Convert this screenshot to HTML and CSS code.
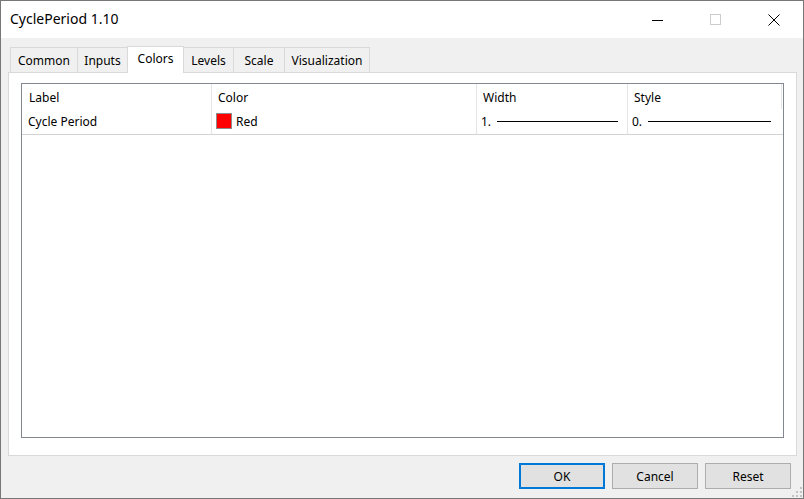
FILE: index.html
```html
<!DOCTYPE html>
<html>
<head>
<meta charset="utf-8">
<link rel="stylesheet" href="styles.css">
</head>
<body>
<div class="window">
  <div class="titlebar">
    <div class="title">CyclePeriod 1.10</div>
    <div class="controls">
      <div class="ctl"><svg width="12" height="12" viewBox="0 0 12 12"><line x1="0" y1="6.5" x2="11" y2="6.5" stroke="#000" stroke-width="1"/></svg></div>
      <div class="ctl"><svg width="12" height="12" viewBox="0 0 12 12"><rect x="0.5" y="0.5" width="10" height="10" fill="none" stroke="#cccccc" stroke-width="1"/></svg></div>
      <div class="ctl"><svg width="12" height="12" viewBox="0 0 12 12"><path d="M0.5 0.5 L11.5 11.5 M11.5 0.5 L0.5 11.5" stroke="#000" stroke-width="1" fill="none"/></svg></div>
    </div>
  </div>
  <div class="content">
    <div class="tabs">
      <div class="tab t-common">Common</div>
      <div class="tab t-inputs">Inputs</div>
      <div class="tab t-colors active">Colors</div>
      <div class="tab t-levels">Levels</div>
      <div class="tab t-scale">Scale</div>
      <div class="tab t-vis">Visualization</div>
    </div>
    <div class="panel">
      <div class="list">
        <div class="row header">
          <div class="cell c-label">Label</div>
          <div class="cell c-color">Color</div>
          <div class="cell c-width">Width</div>
          <div class="cell c-style">Style</div>
          <div class="cell c-rest"></div>
        </div>
        <div class="row item">
          <div class="cell c-label">Cycle Period</div>
          <div class="cell c-color"><span class="swatch"></span><span>Red</span></div>
          <div class="cell c-width"><span>1.</span><span class="linesample w1"></span></div>
          <div class="cell c-style"><span>0.</span><span class="linesample w2"></span></div>
          <div class="cell c-rest"></div>
        </div>
      </div>
    </div>
    <div class="buttons">
      <button class="btn default">OK</button>
      <button class="btn">Cancel</button>
      <button class="btn">Reset</button>
    </div>
    <div class="grip">
      <svg width="11" height="11" viewBox="0 0 11 11">
        <g fill="#c3c3c3">
          <rect x="8" y="0" width="2" height="2"/>
          <rect x="4" y="4" width="2" height="2"/><rect x="8" y="4" width="2" height="2"/>
          <rect x="0" y="8" width="2" height="2"/><rect x="4" y="8" width="2" height="2"/><rect x="8" y="8" width="2" height="2"/>
        </g>
      </svg>
    </div>
  </div>
</div>
</body>
</html>
```

FILE: styles.css
```css
html, body {
  margin: 0;
  padding: 0;
  background: #f0f0f0;
}
body {
  font-family: "Noto Sans", "Open Sans", sans-serif;
  font-size: 12px;
  color: #000;
}
.window {
  width: 804px;
  height: 499px;
  box-sizing: border-box;
  border: 1px solid #777777;
  display: flex;
  flex-direction: column;
  background: #f0f0f0;
  position: relative;
}
.titlebar {
  height: 37px;
  background: #ffffff;
  display: flex;
  align-items: center;
  justify-content: space-between;
  flex-shrink: 0;
}
.title {
  padding-left: 9px;
  font-size: 14px;
  line-height: 20px;
  margin-top: -1px;
}
.controls {
  display: flex;
  height: 100%;
}
.ctl {
  width: 58px;
  height: 100%;
  display: flex;
  align-items: center;
  justify-content: center;
}
.content {
  flex: 1;
  display: flex;
  flex-direction: column;
  position: relative;
}
.tabs {
  display: flex;
  align-items: flex-end;
  margin-top: 8px;
  margin-left: 9px;
  height: 26px;
  position: relative;
  z-index: 1;
}
.tab {
  box-sizing: border-box;
  height: 25px;
  border: 1px solid #d9d9d9;
  border-bottom: none;
  background: #f0f0f0;
  margin-right: -1px;
  display: flex;
  align-items: center;
  justify-content: center;
  padding-top: 1px;
}
.tab.active {
  height: 27px;
  background: #ffffff;
  margin-bottom: -1px;
  padding-top: 0;
  padding-bottom: 3px;
}
.t-common { width: 68px; }
.t-inputs { width: 51px; }
.t-colors { width: 57px; }
.t-levels { width: 51px; }
.t-scale { width: 52px; }
.t-vis { width: 86px; }

.panel {
  margin-left: 7px;
  width: 789px;
  height: 384px;
  box-sizing: border-box;
  border: 1px solid #d9d9d9;
  background: #ffffff;
  padding: 10px 0 0 12px;
}
.list {
  width: 763px;
  height: 355px;
  box-sizing: border-box;
  border: 1px solid #828790;
  background: #ffffff;
}
.row {
  display: flex;
}
.row.header {
  height: 25px;
}
.row.item {
  height: 25px;
  border-bottom: 1px solid #d3d3d3;
}
.cell {
  box-sizing: border-box;
  display: flex;
  align-items: center;
  border-right: 1px solid #e5e5e5;
  white-space: nowrap;
}
.header .cell { padding-top: 1px; }
.item .cell { padding-bottom: 1px; }
.c-label { width: 190px; padding-left: 6px; }
.header .c-label { padding-left: 7px; }
.c-color { width: 265px; padding-left: 4px; }
.header .c-color { padding-left: 6px; }
.c-width { width: 151px; padding-left: 4px; }
.header .c-width { padding-left: 6px; }
.c-style { width: 154px; padding-left: 4px; }
.header .c-style { padding-left: 6px; }
.c-rest { flex: 1; border-right: none; }
.item .c-style { border-right: none; }
.item .c-rest { border-right: none; }
.swatch {
  width: 14px;
  height: 14px;
  background: #ff0000;
  border: 1px solid #8c8c8c;
  margin-right: 4px;
  flex-shrink: 0;
}
.linesample {
  height: 1px;
  background: #000;
  margin-left: 6px;
  margin-top: 1px;
}
.w1 { width: 121px; }
.w2 { width: 123px; }

.buttons {
  display: flex;
  justify-content: flex-end;
  gap: 7px;
  padding-right: 12px;
  margin-top: 7px;
}
.btn {
  width: 86px;
  height: 26px;
  box-sizing: border-box;
  border: 1px solid #adadad;
  background: #e1e1e1;
  font-family: "Noto Sans", "Open Sans", sans-serif;
  font-size: 12px;
  color: #000;
  padding: 0;
  margin: 0;
}
.btn.default {
  border: 2px solid #0078d7;
}
.grip {
  position: absolute;
  right: 0;
  bottom: 0;
  width: 11px;
  height: 11px;
}
.grip svg { display: block; }
```
